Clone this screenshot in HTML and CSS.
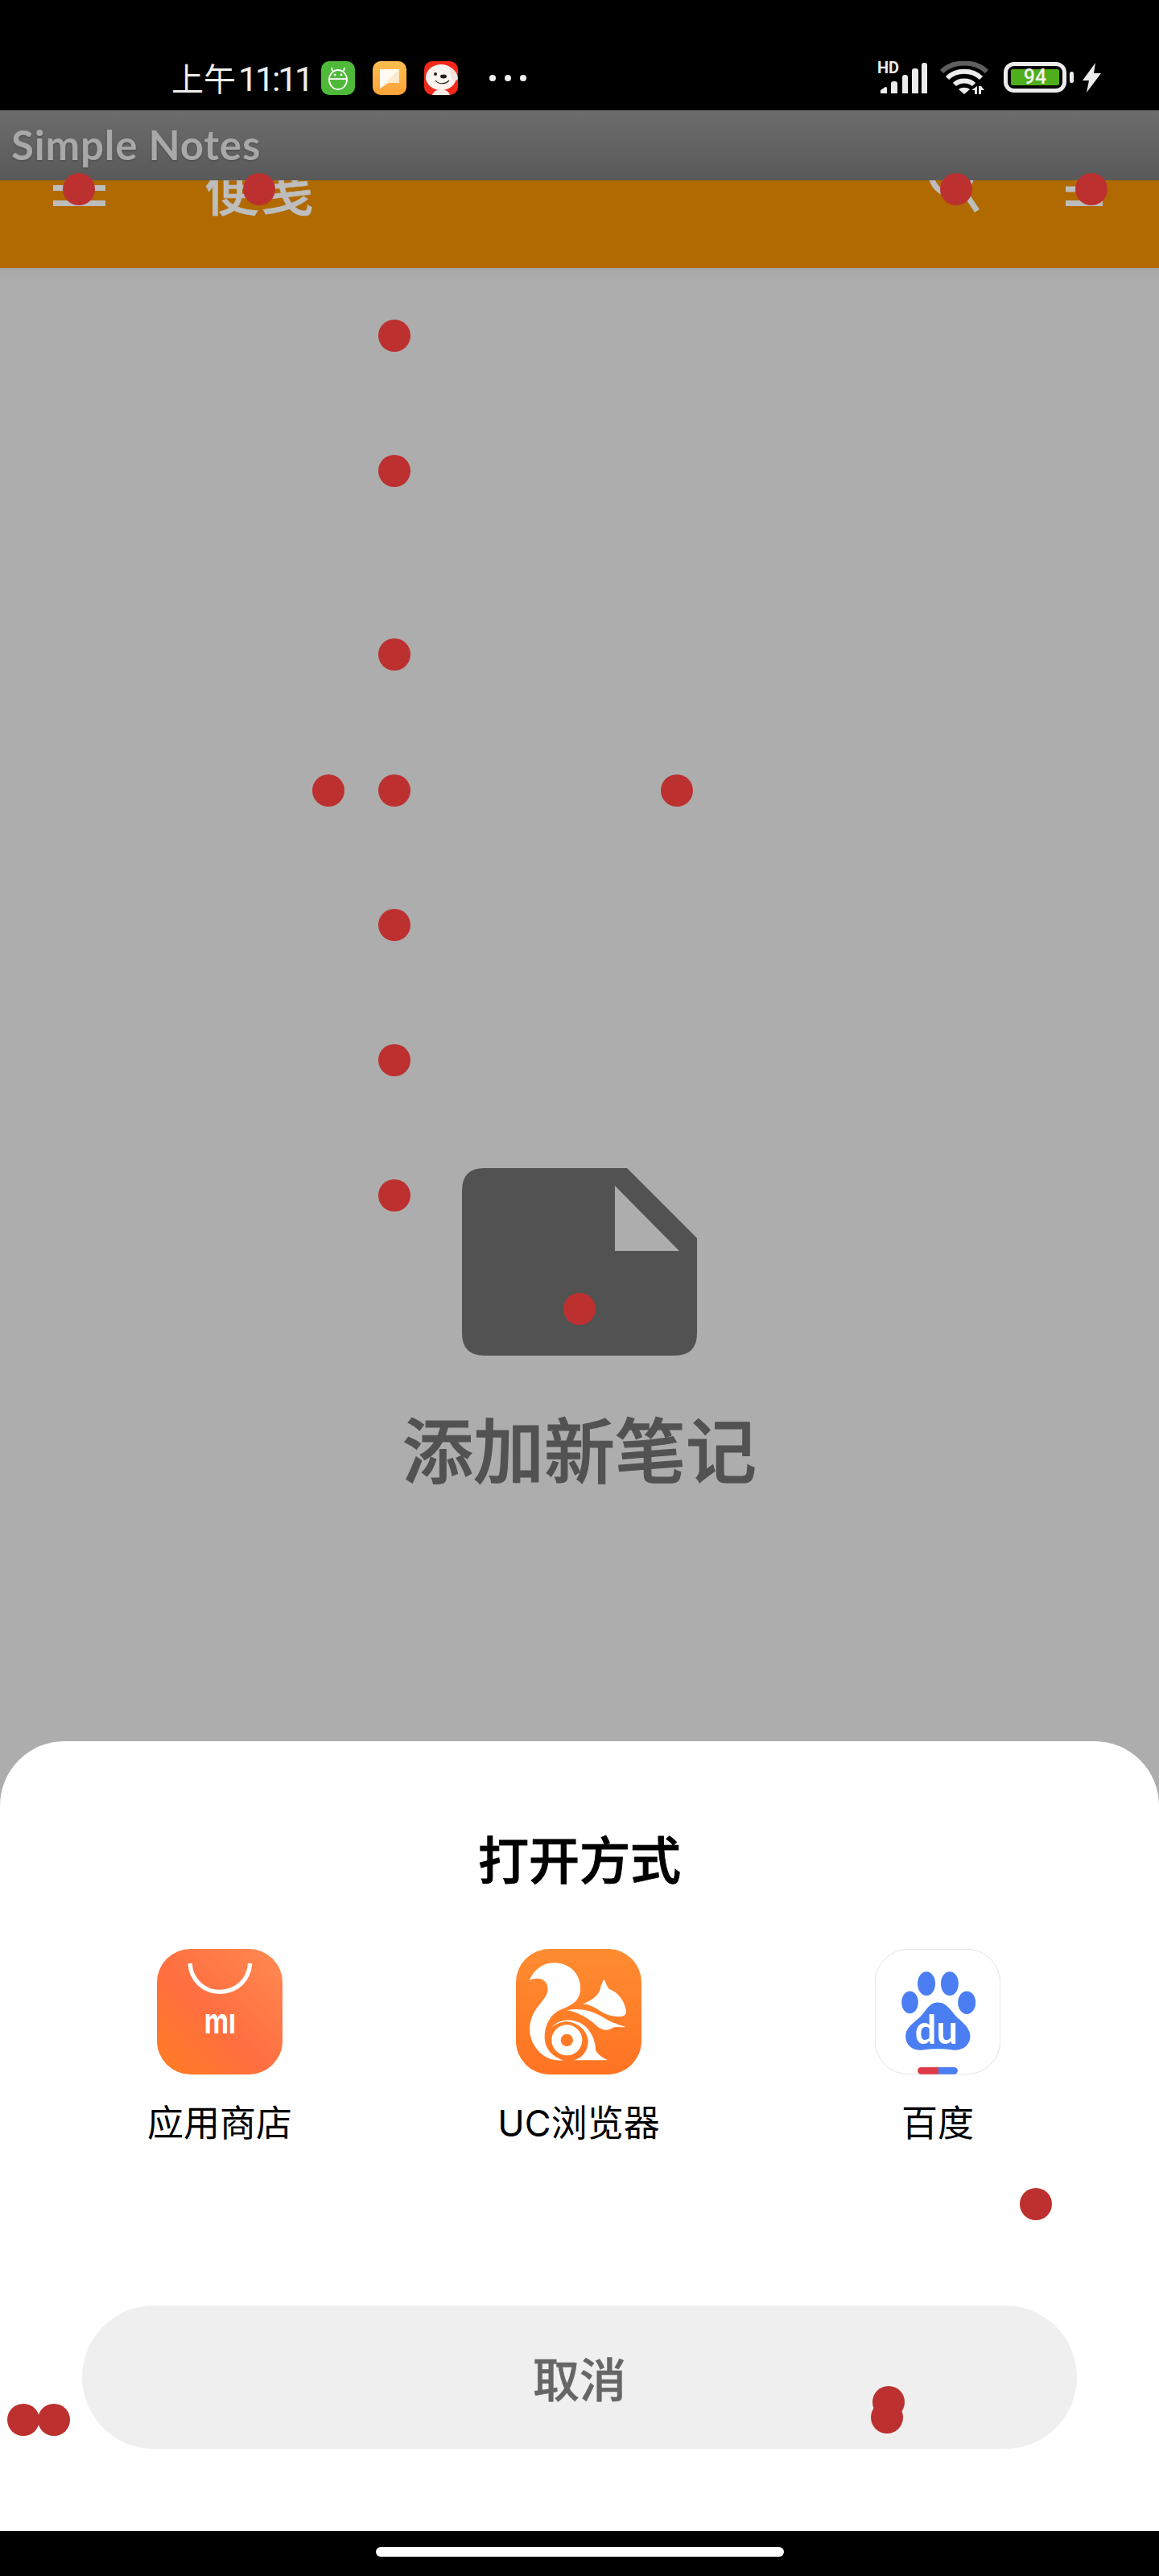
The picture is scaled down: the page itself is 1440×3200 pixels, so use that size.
FILE: index.html
```html
<!DOCTYPE html>
<html lang="zh-CN">
<head>
<meta charset="utf-8">
<title>Simple Notes</title>
<link rel="stylesheet" href="styles.css">
</head>
<body>
<div class="app">
  <div class="status">
    <div class="status-left">
      <span class="time">上午<span class="digits">11:11</span></span>
      <svg class="nicon" viewBox="0 0 42 42"><rect width="42" height="42" rx="10" fill="#4fb93a"/><g fill="none" stroke="#fff" stroke-width="1.8"><ellipse cx="21" cy="23" rx="11" ry="12"/><path d="M10.5 22h21"/><path d="M14 12l-1-4M28 12l1-4"/></g><circle cx="17" cy="17" r="1.4" fill="#fff"/><circle cx="25" cy="17" r="1.4" fill="#fff"/></svg>
      <svg class="nicon" viewBox="0 0 42 42"><defs><linearGradient id="og" x1="0" y1="0" x2="0" y2="1"><stop offset="0" stop-color="#ffbe4f"/><stop offset="1" stop-color="#ffa33a"/></linearGradient></defs><rect width="42" height="42" rx="10" fill="url(#og)"/><path d="M9 10h24v17H20l-11 7z" fill="#ffe9c9"/><path d="M9 10h24L9 34z" fill="#fffaf2"/></svg>
      <svg class="nicon" viewBox="0 0 42 42"><rect width="42" height="42" rx="10" fill="#f3281b"/><ellipse cx="21" cy="20" rx="19" ry="16" fill="#fbf3ee"/><path d="M31 8c6 1 10 6 11 14-2 3-5 3-7 1z" fill="#efe4de"/><path d="M10 42c2-5 6-7 11-7s9 2 11 7z" fill="#f6ecea"/><circle cx="14" cy="16" r="2" fill="#222"/><ellipse cx="24" cy="19" rx="4" ry="2.4" fill="#222"/><path d="M14 24c4 5 12 5 17 0" fill="none" stroke="#222" stroke-width="1.2"/></svg>
      <span class="more"><i></i><i></i><i></i></span>
    </div>
    <div class="status-right">
      <div class="signal">
        <span class="hd">HD</span>
        <svg class="bars" viewBox="0 0 60 40"><path d="M2 40v-4l6-4q2 0 2 1v7zM15 40V28q0-3 3-3h2q3 0 3 3v12zM29 40V20q0-3 3-3h1q3 0 3 3v20zM41 40V12q0-3 3-3h2q3 0 3 3v28zM53 40V5q0-3 3-3h1q3 0 3 3v35z" fill="#ececec"/></svg>
      </div>
      <svg class="wifi" viewBox="0 0 60 42"><g fill="none" stroke-width="6"><path d="M2 13C16 -1 44 -1 58 13" stroke="#5f5f5f"/><path d="M9 21C20 10 40 10 51 21" stroke="#ececec"/><path d="M18 29C24 23 36 23 42 29" stroke="#ececec"/></g><path d="M23 35c4-3 10-3 14 0l-7 6z" fill="#ececec"/><path d="M46 31v10h-3v-5l-4 0zM48 41V31h3l4 5h-4v5z" fill="#ececec"/></svg>
      <div class="battery-wrap">
        <div class="battery"><div class="level">94</div></div>
        <span class="nub"></span>
      </div>
      <svg class="bolt" viewBox="0 0 23 37"><path d="M16 0L0 22h8L5 37 23 13h-9z" fill="#ececec"/></svg>
    </div>
  </div>

  <div class="recent-title">Simple Notes</div>

  <header class="toolbar">
    <div class="toolbar-row">
      <svg class="burger" viewBox="0 0 65 52"><path d="M0 8.5h65M0 27.5h65M0 46.5h65" stroke="#bdbdbd" stroke-width="7"/></svg>
      <span class="toolbar-title">便笺</span>
      <svg class="search" viewBox="0 0 70 80"><circle cx="32" cy="32" r="25" fill="none" stroke="#bdbdbd" stroke-width="7"/><path d="M48 54l16 24" stroke="#bdbdbd" stroke-width="7" fill="none"/></svg>
      <svg class="menu" viewBox="0 0 46 52"><path d="M0 12h46M0 29h46M0 46.500h46" stroke="#bdbdbd" stroke-width="7"/></svg>
    </div>
  </header>

  <main class="empty">
    <svg class="doc" viewBox="0 0 292 233"><path fill-rule="evenodd" d="M28 0H205L292 87V205Q292 233 264 233H28Q0 233 0 205V28Q0 0 28 0ZM190 22V103H270Z" fill="#525252"/></svg>
    <div class="empty-text">添加新笔记</div>
  </main>

  <section class="sheet">
    <h2 class="sheet-title">打开方式</h2>
    <div class="apps">
      <div class="app-item">
        <svg class="app-icon" viewBox="135 93 468 468">
          <defs><linearGradient id="mi" x1="1" y1="0" x2="0" y2="1"><stop offset="0" stop-color="#ff8a52"/><stop offset=".55" stop-color="#ff6e40"/><stop offset="1" stop-color="#ff7d22"/></linearGradient></defs>
          <rect x="135" y="93" width="468" height="468" rx="125" fill="url(#mi)"/>
          <path d="M258 147C262 210 310 253 370 253S478 210 482 147" fill="none" stroke="#fff" stroke-width="16"/>
          <text class="mi-mark" x="370" y="408" text-anchor="middle" textLength="118" lengthAdjust="spacingAndGlyphs">mı</text>
        </svg>
        <span class="app-label">应用商店</span>
      </div>
      <div class="app-item">
        <svg class="app-icon" viewBox="155 93 468 468">
          <defs><linearGradient id="uc" x1="0" y1="0" x2="0" y2="1"><stop offset="0" stop-color="#ff8c30"/><stop offset="1" stop-color="#ff7322"/></linearGradient></defs>
          <rect x="155" y="93" width="468" height="468" rx="125" fill="url(#uc)"/>
          <g fill="#fff">
            <path d="M205 210C225 165 260 143 305 145C365 150 400 195 395 250C390 290 360 305 320 320C285 335 262 375 262 420C262 465 290 495 332 508C290 512 250 495 225 455C200 415 200 370 225 325C250 285 285 265 270 225C260 200 230 198 205 210Z"/>
            <path d="M405 297C440 285 465 265 470 240C472 225 478 213 485 207C490 222 495 235 502 242C535 255 560 285 566 325C566 335 562 342 552 344C525 348 495 342 470 325C450 310 428 300 405 297Z"/>
            <path d="M345 322C390 312 435 322 475 345C505 365 535 375 565 384C545 386 530 382 515 387C500 398 480 398 462 385C430 355 390 328 345 322Z"/>
            <path d="M288 385C320 350 375 352 412 380C440 405 452 440 452 470C462 490 480 498 498 508H372C405 498 425 470 424 435C420 395 385 368 345 364C325 364 305 372 288 385Z"/>
            <path fill-rule="evenodd" d="M345 376A57 57 0 1 0 345 490A57 57 0 1 0 345 376ZM345 410A23 23 0 1 1 345 456A23 23 0 1 1 345 410Z"/>
          </g>
        </svg>
        <span class="app-label">UC浏览器</span>
      </div>
      <div class="app-item">
        <svg class="app-icon" viewBox="140 92 470 470">
          <rect x="141" y="93" width="468" height="468" rx="124" fill="#fff" stroke="#e2e2e2" stroke-width="3"/>
          <g fill="#4a7ef2">
            <ellipse cx="333" cy="222" rx="33" ry="45"/><ellipse cx="420" cy="222" rx="33" ry="45"/>
            <ellipse cx="271" cy="292" rx="31" ry="42"/><ellipse cx="484" cy="293" rx="33" ry="43"/>
            <path d="M375 292C340 292 330 330 300 355C270 380 255 395 255 420C255 455 285 475 320 470C350 465 400 465 430 470C470 475 497 450 497 420C497 395 480 375 450 350C425 325 410 292 375 292Z"/>
          </g>
          <text class="du-mark" x="370" y="447" text-anchor="middle" textLength="160" lengthAdjust="spacingAndGlyphs">du</text>
          <path d="M378 535H313A13 13 0 0 0 313 561H378Z" fill="#dd3a48"/>
          <path d="M378 535H437A13 13 0 0 1 437 561H378Z" fill="#4a7ef2"/>
        </svg>
        <span class="app-label">百度</span>
      </div>
    </div>
    <button class="cancel">取消</button>
  </section>

  <div class="navbar"><span class="home"></span></div>

  <div class="pins">
    <span class="pin p1"></span><span class="pin p2"></span><span class="pin p3"></span><span class="pin p4"></span>
    <span class="pin p5"></span><span class="pin p6"></span><span class="pin p7"></span><span class="pin p8"></span>
    <span class="pin p9"></span><span class="pin p10"></span><span class="pin p11"></span><span class="pin p12"></span>
    <span class="pin p13"></span><span class="pin p14"></span><span class="pin p15"></span><span class="pin p16"></span>
    <span class="pin p17"></span><span class="pin p18"></span><span class="pin p19"></span>
  </div>
</div>
</body>
</html>
```
FILE: styles.css
```css
* { box-sizing: border-box; }
html, body { margin: 0; padding: 0; }
body { font-family: "Noto Sans CJK SC", "Noto Sans", sans-serif; }

.app {
  position: relative;
  width: 1440px;
  height: 3200px;
  display: flex;
  flex-direction: column;
  background: #adadad;
  overflow: hidden;
}

/* status bar */
.status {
  height: 137px;
  flex: none;
  background: #000;
  display: flex;
  justify-content: space-between;
  padding-top: 76px;
  padding-left: 213px;
  padding-right: 72px;
}
.status-left { display: flex; align-items: flex-start; }
.time {
  color: #eee;
  font-size: 40px;
  line-height: 42px;
  width: 186px;
  white-space: nowrap;
  margin-top: -1px;
}
.digits { font-family: "Roboto", sans-serif; font-size: 43px; letter-spacing: -3.2px; margin-left: 3px; }
.nicon { width: 42px; height: 42px; margin-right: 22px; flex: none; }
.more { display: flex; gap: 11px; margin-left: 17px; margin-top: 17px; }
.more i { display: block; width: 8px; height: 8px; border-radius: 50%; background: #eee; }
.status-right { display: flex; align-items: flex-start; }
.signal { position: relative; width: 60px; height: 40px; margin-right: 16px; }
.hd {
  position: absolute;
  left: -2px;
  top: -2px;
  color: #ececec;
  font: 700 20px/20px "Roboto", sans-serif;
}
.bars { position: absolute; left: 0; top: 0; width: 60px; height: 40px; }
.wifi { width: 60px; height: 42px; margin-right: 19px; }
.battery-wrap { display: flex; align-items: center; height: 38px; margin-top: 1px; }
.battery {
  width: 78px;
  height: 38px;
  border: 5px solid #ececec;
  border-radius: 13px;
  padding: 4px;
}
.level {
  height: 20px;
  background: #4fae1c;
  border-radius: 2px;
  color: #f2f2f2;
  text-align: center;
  font: 500 25px/20px "Roboto", sans-serif;
}
.nub { width: 5px; height: 14px; margin-left: 4px; background: #ececec; border-radius: 3px; }
.bolt { width: 23px; height: 37px; margin-left: 11px; margin-top: 2px; }

/* recents title band */
.recent-title {
  height: 87px;
  flex: none;
  position: relative;
  z-index: 2;
  background: linear-gradient(#6c6c6c, #595959);
  color: #a8a8a8;
  font: 700 51px/56px "Lato", sans-serif;
  letter-spacing: .8px;
  padding: 15px 0 0 14px;
  text-shadow: 0 1px 2px rgba(40, 40, 40, .5);
}

/* app toolbar */
.toolbar {
  height: 109px;
  flex: none;
  background: #b06a00;
}
.toolbar-row {
  height: 72px;
  margin-top: -18px;
  display: flex;
  align-items: flex-start;
  padding-left: 66px;
}
.burger { width: 65px; height: 52px; flex: none; }
.toolbar-title {
  color: #bdbdbd;
  font-size: 68px;
  font-weight: 500;
  line-height: 50px;
  margin-left: 123px;
  margin-top: 2px;
  width: 896px;
  flex: none;
  white-space: nowrap;
  -webkit-text-stroke: .6px #bdbdbd;
}
.search { width: 70px; height: 80px; flex: none; margin-top: -22px; }
.menu { width: 46px; height: 52px; flex: none; margin-left: 104px; }

/* empty state */
.empty {
  flex: 1;
  display: flex;
  flex-direction: column;
  align-items: center;
  padding-top: 1118px;
  background: linear-gradient(#a6a6a6, #adadad 14px);
}
.doc { width: 292px; height: 233px; flex: none; }
.empty-text {
  color: #525252;
  font-size: 88px;
  font-weight: 500;
  line-height: 120px;
  margin-top: 53px;
  -webkit-text-stroke: 1.2px #525252;
}

/* bottom sheet */
.sheet {
  height: 981px;
  flex: none;
  background: #fff;
  border-radius: 80px 80px 0 0;
  padding: 104px 50px 0;
  display: flex;
  flex-direction: column;
  align-items: center;
}
.sheet-title {
  margin: 0;
  color: #000;
  font-size: 63px;
  font-weight: 500;
  line-height: 80px;
  -webkit-text-stroke: 1px #000;
}
.apps {
  align-self: stretch;
  display: grid;
  grid-template-columns: repeat(3, 446px);
  margin-top: 74px;
}
.app-item { display: flex; flex-direction: column; align-items: center; }
.app-icon { width: 156px; height: 156px; display: block; }
.app-label {
  color: #000;
  font-family: "Inter", "Noto Sans CJK SC", sans-serif;
  font-size: 45px;
  line-height: 60px;
  margin-top: 31px;
  white-space: nowrap;
}
.mi-mark { font: 700 130px "Inter", sans-serif; fill: #fff; }
.du-mark { font: 700 150px "Lato", sans-serif; fill: #fff; }
.cancel {
  width: 1236px;
  height: 178px;
  flex: none;
  margin-top: 196px;
  border: 0;
  border-radius: 89px;
  background: #efefef;
  color: #666;
  font-family: inherit;
  font-size: 58px;
  font-weight: 500;
  -webkit-text-stroke: .5px #666;
}

/* navigation bar */
.navbar {
  height: 56px;
  flex: none;
  background: #000;
  display: flex;
  justify-content: center;
  padding-top: 20px;
}
.home { width: 507px; height: 12px; border-radius: 6px; background: #fff; }

/* touch pins */
.pins { position: absolute; inset: 0; z-index: 5; pointer-events: none; }
.pin {
  position: absolute;
  width: 40px;
  height: 40px;
  margin: -20px 0 0 -20px;
  border-radius: 50%;
  background: #bd3030;
}
.p1 { left: 98px; top: 235px; }
.p2 { left: 322px; top: 235px; }
.p3 { left: 1188px; top: 235px; }
.p4 { left: 1356px; top: 235px; }
.p5 { left: 490px; top: 417px; }
.p6 { left: 490px; top: 585px; }
.p7 { left: 490px; top: 813px; }
.p8 { left: 408px; top: 982px; }
.p9 { left: 490px; top: 982px; }
.p10 { left: 841px; top: 982px; }
.p11 { left: 490px; top: 1149px; }
.p12 { left: 490px; top: 1317px; }
.p13 { left: 490px; top: 1485px; }
.p14 { left: 720px; top: 1626px; }
.p15 { left: 1287px; top: 2738px; }
.p16 { left: 29px; top: 3006px; }
.p17 { left: 67px; top: 3006px; }
.p18 { left: 1104px; top: 2984px; }
.p19 { left: 1102px; top: 3003px; }
```
